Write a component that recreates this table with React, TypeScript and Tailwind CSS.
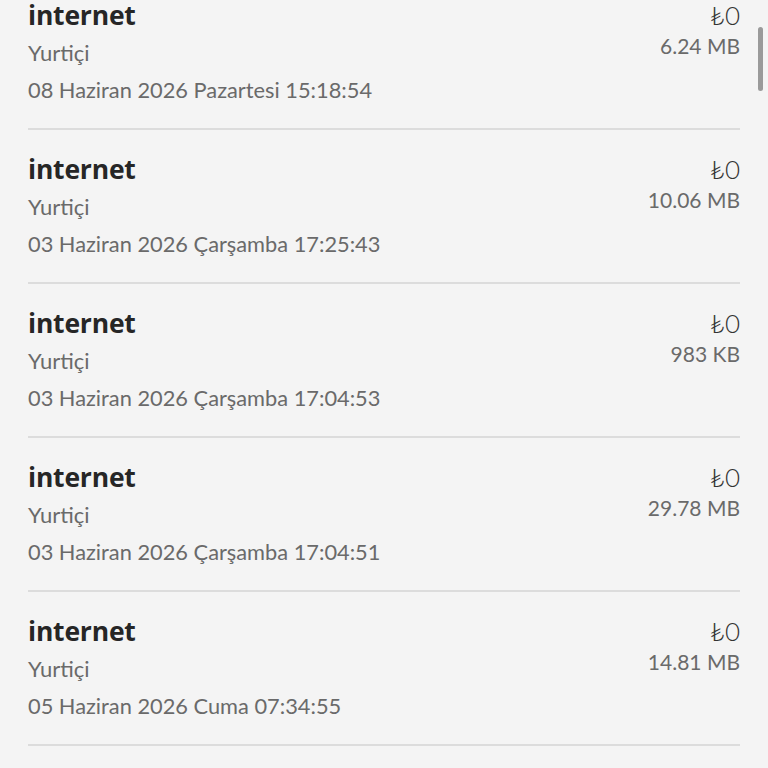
const items = [
  { date: '08 Haziran 2026 Pazartesi 15:18:54', size: '6.24 MB' },
  { date: '03 Haziran 2026 Çarşamba 17:25:43', size: '10.06 MB' },
  { date: '03 Haziran 2026 Çarşamba 17:04:53', size: '983 KB' },
  { date: '03 Haziran 2026 Çarşamba 17:04:51', size: '29.78 MB' },
  { date: '05 Haziran 2026 Cuma 07:34:55', size: '14.81 MB' },
];

export default function App() {
  return (
    <div className="relative h-[768px] w-[768px] overflow-hidden bg-[#f4f4f4] font-['Lato',sans-serif]">
      <div className="-mt-[24px] flex flex-col pl-[28px] pr-[28px]">
        {items.map((it, i) => (
          <div key={i} className="flex h-[154px] justify-between border-b-2 border-[#dcdcdc] pt-[22px]">
            <div className="flex flex-col">
              <span className="font-['Open_Sans',sans-serif] text-[26.5px] leading-[34px] font-bold tracking-[-0.2px] text-[#262626]">internet</span>
              <span className="mt-[4px] text-[22px] leading-[34px] text-[#6a6a6a]">Yurtiçi</span>
              <span className="mt-[3px] text-[21.8px] leading-[34px] text-[#6a6a6a]">{it.date}</span>
            </div>
            <div className="flex flex-col items-end">
              <span className="text-[26px] leading-[34px] font-light text-[#333]">₺0</span>
              <span className="-mt-[1px] text-[21px] leading-[30px] text-[#6a6a6a]">{it.size}</span>
            </div>
          </div>
        ))}
      </div>
      <div className="absolute right-[5px] top-[27px] h-[64px] w-[5px] rounded-full bg-[#9a9a9a]" />
    </div>
  );
}
